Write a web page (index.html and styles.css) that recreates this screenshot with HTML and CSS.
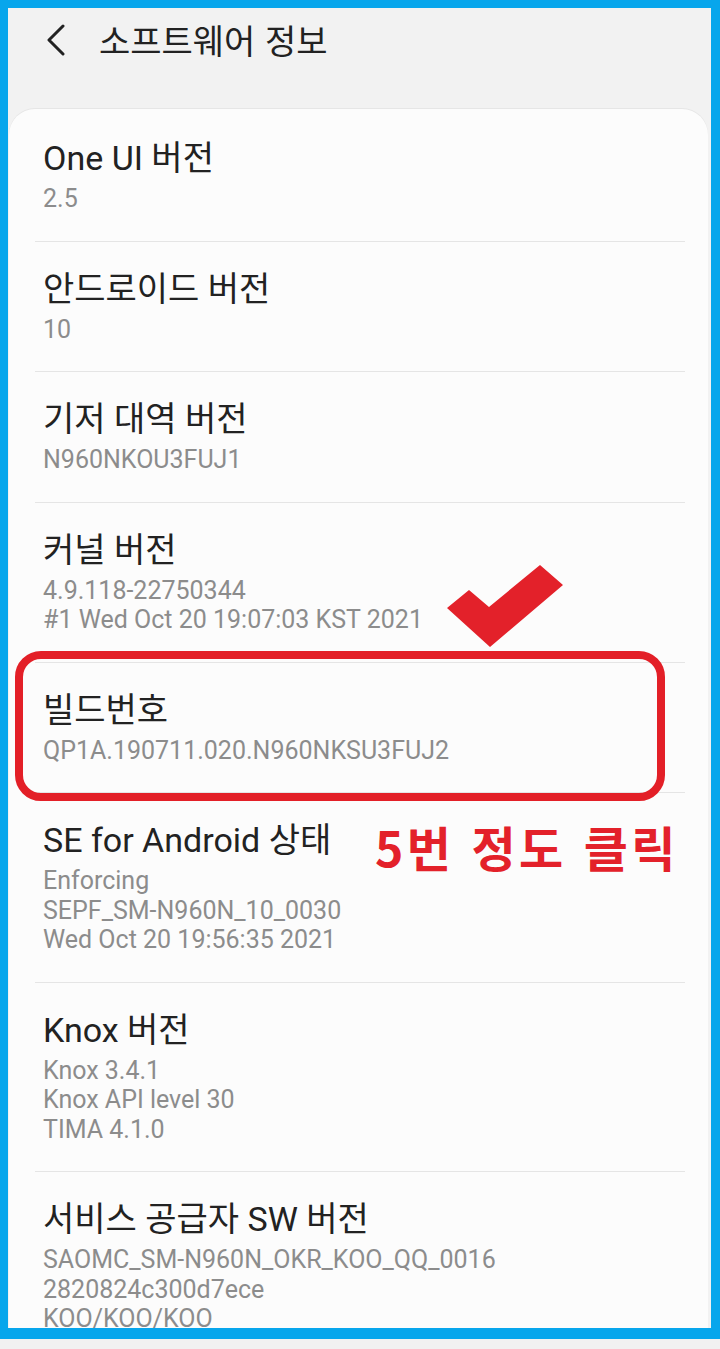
FILE: index.html
```html
<!DOCTYPE html>
<html lang="ko">
<head>
<meta charset="utf-8">
<title>소프트웨어 정보</title>
<link rel="stylesheet" href="styles.css">
</head>
<body>
<div class="frame">
  <header class="topbar">
    <svg class="back" width="20" height="32" viewBox="0 0 20 32"><polyline points="17,2 3,16 17,30" fill="none" stroke="#222" stroke-width="3" stroke-linecap="round" stroke-linejoin="round"/></svg>
    <h1 class="title">소프트웨어 정보</h1>
  </header>
  <main class="card">
    <div class="item"><div class="item-title">One UI 버전</div><div class="sub">2.5</div></div>
    <div class="item"><div class="item-title">안드로이드 버전</div><div class="sub">10</div></div>
    <div class="item"><div class="item-title">기저 대역 버전</div><div class="sub">N960NKOU3FUJ1</div></div>
    <div class="item"><div class="item-title">커널 버전</div><div class="sub">4.9.118-22750344<br>#1 Wed Oct 20 19:07:03 KST 2021</div></div>
    <div class="item"><div class="item-title">빌드번호</div><div class="sub">QP1A.190711.020.N960NKSU3FUJ2</div></div>
    <div class="item"><div class="item-title">SE for Android 상태</div><div class="sub">Enforcing<br>SEPF_SM-N960N_10_0030<br>Wed Oct 20 19:56:35 2021</div></div>
    <div class="item"><div class="item-title">Knox 버전</div><div class="sub">Knox 3.4.1<br>Knox API level 30<br>TIMA 4.1.0</div></div>
    <div class="item last"><div class="item-title">서비스 공급자 SW 버전</div><div class="sub">SAOMC_SM-N960N_OKR_KOO_QQ_0016<br>2820824c300d7ece<br>KOO/KOO/KOO</div></div>
  </main>
</div>
<div class="highlight"></div>
<svg class="check" width="720" height="700" viewBox="0 0 720 700"><polygon points="447,608 469,590 489,607 540,565 563,585 490,647" fill="#e3212a"/></svg>
<div class="note">5번 정도 클릭</div>
</body>
</html>
```
FILE: styles.css
```css
html, body {
  margin: 0;
  padding: 0;
}
body {
  position: relative;
  width: 720px;
  height: 1349px;
  background: #f1f1f1;
  overflow: hidden;
  font-family: Roboto, "Noto Sans CJK KR", sans-serif;
}
.frame {
  box-sizing: border-box;
  width: 720px;
  height: 1339px;
  border-style: solid;
  border-color: #07a6ec;
  border-width: 8px 9px 11px 8px;
  background: #f2f2f2;
  display: flex;
  flex-direction: column;
  overflow: hidden;
}
.topbar {
  height: 101px;
  flex: none;
  display: flex;
  align-items: flex-start;
  padding-top: 12px;
  box-sizing: border-box;
}
.back {
  margin: 4px 0 0 38px;
  flex: none;
}
.title {
  margin: 0 0 0 33px;
  font-family: "Noto Sans CJK KR", sans-serif;
  font-weight: 400;
  font-size: 34px;
  line-height: 40px;
  color: #222;
}
.card {
  flex: 1;
  margin: 0 3px 0 1px;
  background: #fcfcfc;
  border-radius: 26px 26px 0 0;
  box-shadow: 0 -1px 0 #e6e6e6;
  padding: 2px 23px 0 26px;
  overflow: hidden;
}
.item {
  padding: 28px 0 27px 8px;
  border-bottom: 1px solid #e5e5e5;
}
.item.last {
  border-bottom: none;
}
.item-title {
  font-size: 34px;
  line-height: 38px;
  color: #222;
  margin-bottom: 7px;
}
.sub {
  font-size: 25px;
  line-height: 29.5px;
  color: #8c8c8c;
}
.highlight {
  position: absolute;
  left: 15px;
  top: 651px;
  width: 650px;
  height: 150px;
  box-sizing: border-box;
  border: 8px solid #e31f27;
  border-radius: 26px;
}
.check {
  position: absolute;
  left: 0;
  top: 0;
}
.note {
  position: absolute;
  left: 375px;
  top: 813px;
  font-family: "Noto Sans CJK KR", sans-serif;
  font-weight: 700;
  font-size: 48px;
  letter-spacing: 3.5px;
  line-height: 66px;
  color: #e3212a;
  white-space: nowrap;
}
```
